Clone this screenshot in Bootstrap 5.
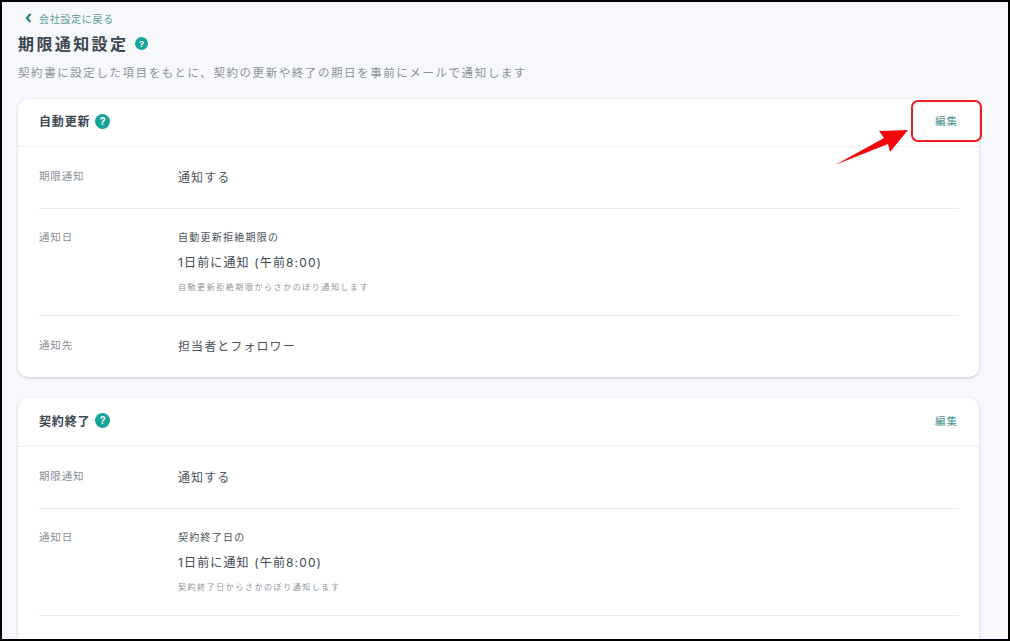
<!DOCTYPE html>
<html lang="ja"><head><meta charset="utf-8"><title>期限通知設定</title>
<link href="https://cdn.jsdelivr.net/npm/bootstrap@5.3.0/dist/css/bootstrap.min.css" rel="stylesheet">
<style>
html,body{height:100%;overflow:hidden}
body{font-family:"Noto Sans CJK JP","Noto Sans",sans-serif;background:#f7f8fc;color:#3c4650}
.frame{width:1010px;height:641px;border:2px solid #000;padding:7px 29px 0 16px;overflow:hidden;position:relative;background:#f7f8fc}
.back{height:18px;font-size:10px;color:#5a9a98;letter-spacing:.07em;padding-left:7px;gap:7px;text-decoration:none}
.ttl{font-size:16px;font-weight:700;letter-spacing:.15em;margin:0;color:#3c4650;line-height:24px}
.head{margin-top:4px;gap:0}
.qmark{margin-left:7px}
.desc{font-size:11.5px;color:#8b9299;letter-spacing:.136em;margin:7px 0 0;line-height:20px;height:20px}
.panel{background:#fff;border-radius:10px;box-shadow:0 1px 3px rgba(60,70,80,.25);margin-top:17px;margin-bottom:21px}
.panel+.panel{margin-top:0}
.deskhead{height:48px;padding:0 21px 3px;border-bottom:1px solid #ebedf0}
.panel+.panel .deskhead{height:49px}
.deskhead b{font-size:12px;font-weight:700;letter-spacing:.07em;color:#3c4650}
.gapq{gap:5px}
.edit{font-size:10.5px;color:#45908c;letter-spacing:.1em;text-decoration:none;line-height:14px}
.rowline{margin:0 20px 0 21px;border-bottom:1px solid #e8eaed;display:flex}
.rowline:last-child{border-bottom:0}
.lbl{width:139px;font-size:10.5px;color:#8a9097;letter-spacing:.08em;flex:none;line-height:18px}
.r1{height:62px;padding-top:20px}
.val{font-size:12px;letter-spacing:.09em;line-height:22px;color:#4a535c;margin-top:-1px}
.r2{height:107px;padding-top:19px}
.pre{font-size:10px;letter-spacing:.125em;line-height:20px;color:#4a535c;margin-top:-1px}
.big{font-family:Inter,"Noto Sans CJK JP",sans-serif;font-size:12px;letter-spacing:.095em;line-height:20px;margin-top:6px;color:#3c4650}
.note{font-size:8px;letter-spacing:.195em;color:#8f959b;line-height:14px;margin-top:7px}
.r3{height:61px;padding-top:20px}
.redbox{position:absolute;left:909px;top:98px;width:71px;height:42px;border:2px solid #ee1c25;border-radius:7px}
.arrow{position:absolute;left:830px;top:124px}
</style></head><body>
<div class="frame">
<a class="back d-flex align-items-center" href="#"><svg width="7" height="10" viewBox="0 0 7 10"><path d="M5.5 1 1.8 5l3.7 4" fill="none" stroke="#1f7f7b" stroke-width="2"/></svg><span>会社設定に戻る</span></a>
<div class="head d-flex align-items-center"><h1 class="ttl">期限通知設定</h1><svg class="qmark" width="13" height="13" viewBox="0 0 13 13"><circle cx="6.5" cy="6.5" r="6.5" fill="#17a398"/><text x="6.5" y="9.7" text-anchor="middle" font-size="9" font-weight="700" fill="#fff" font-family="Liberation Sans">?</text></svg></div>
<p class="desc">契約書に設定した項目をもとに、契約の更新や終了の期日を事前にメールで通知します</p>
<div class="panel">
 <div class="deskhead d-flex align-items-center justify-content-between"><div class="d-flex align-items-center gapq"><b>自動更新</b><svg width="15" height="15" viewBox="0 0 15 15"><circle cx="7.5" cy="7.5" r="7.5" fill="#17a398"/><text x="7.5" y="11" text-anchor="middle" font-size="10" font-weight="700" fill="#fff" font-family="Liberation Sans">?</text></svg></div><a class="edit" href="#">編集</a></div>
 <div class="rowline r1"><div class="lbl">期限通知</div><div class="val">通知する</div></div>
 <div class="rowline r2"><div class="lbl">通知日</div><div><div class="pre">自動更新拒絶期限の</div><div class="big">1日前に通知 (午前8:00)</div><div class="note">自動更新拒絶期限からさかのぼり通知します</div></div></div>
 <div class="rowline r3"><div class="lbl">通知先</div><div class="val">担当者とフォロワー</div></div>
</div>
<div class="panel">
 <div class="deskhead d-flex align-items-center justify-content-between"><div class="d-flex align-items-center gapq"><b>契約終了</b><svg width="15" height="15" viewBox="0 0 15 15"><circle cx="7.5" cy="7.5" r="7.5" fill="#17a398"/><text x="7.5" y="11" text-anchor="middle" font-size="10" font-weight="700" fill="#fff" font-family="Liberation Sans">?</text></svg></div><a class="edit" href="#">編集</a></div>
 <div class="rowline r1"><div class="lbl">期限通知</div><div class="val">通知する</div></div>
 <div class="rowline r2"><div class="lbl">通知日</div><div><div class="pre">契約終了日の</div><div class="big">1日前に通知 (午前8:00)</div><div class="note">契約終了日からさかのぼり通知します</div></div></div>
 <div class="rowline r3"></div>
</div>
<div class="redbox"></div>
<svg class="arrow" width="80" height="42" viewBox="0 0 80 42"><path d="M3 39 52 12 47 5 76 4 58 26 56 18Z" fill="#f4080f"/></svg>
</div>
</body></html>
